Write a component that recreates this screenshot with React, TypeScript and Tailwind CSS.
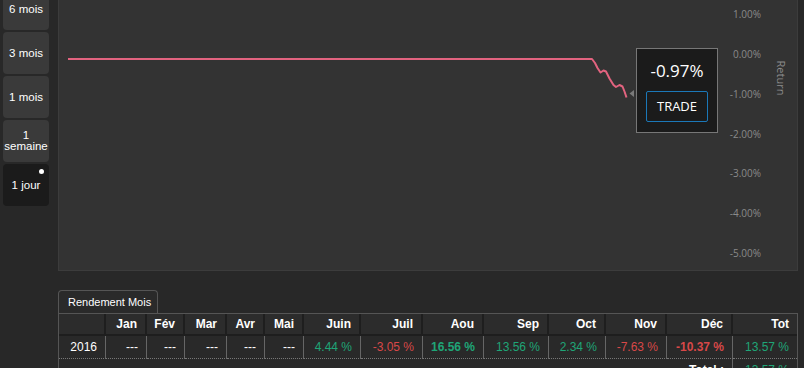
import React from 'react'

const periods = [
  { label: '6 mois' },
  { label: '3 mois' },
  { label: '1 mois' },
  { label: '1\nsemaine' },
  { label: '1 jour', active: true },
]

const axis = [
  { v: '1.00%', y: 14 },
  { v: '0.00%', y: 54 },
  { v: '-1.00%', y: 94 },
  { v: '-2.00%', y: 134 },
  { v: '-3.00%', y: 173 },
  { v: '-4.00%', y: 213 },
  { v: '-5.00%', y: 253 },
]

const months = ['Jan', 'Fév', 'Mar', 'Avr', 'Mai', 'Juin', 'Juil', 'Aou', 'Sep', 'Oct', 'Nov', 'Déc', 'Tot']
const widths = [47, 41, 38, 42, 38, 39, 57, 62, 61, 65, 57, 61, 66, 64]

const row = [
  { v: '---' },
  { v: '---' },
  { v: '---' },
  { v: '---' },
  { v: '---' },
  { v: '4.44 %', c: 'text-[#1fa577]' },
  { v: '-3.05 %', c: 'text-[#d84848]' },
  { v: '16.56 %', c: 'text-[#1fa577] font-bold' },
  { v: '13.56 %', c: 'text-[#1fa577]' },
  { v: '2.34 %', c: 'text-[#1fa577]' },
  { v: '-7.63 %', c: 'text-[#d84848]' },
  { v: '-10.37 %', c: 'text-[#d84848] font-bold' },
  { v: '13.57 %', c: 'text-[#1fa577]' },
]

const linePath =
  'M68 59 L592 59 L595 63 L597.5 68 L600.5 72.5 L603.5 70.5 L606 71.5 L609.5 78.5 L613.5 85 L616 87 L619.5 85 L622.5 86.5 L624.5 91.5 L626.5 97.5'

export default function App() {
  return (
    <div className="w-[804px] h-[368px] overflow-hidden bg-[#282828]" style={{ fontFamily: '"Liberation Sans", Arial, sans-serif' }}>
      {/* Top: period buttons + chart */}
      <div className="flex mt-[-12px] h-[283px]">
        <div className="w-[58px] flex flex-col gap-[2px] pl-[3px]">
          {periods.map(p => (
            <div
              key={p.label}
              className={`relative w-[46px] h-[42px] rounded-[4px] flex items-center justify-center text-center text-white text-[11.5px] leading-[11px] whitespace-pre-line ${p.active ? 'bg-[#1b1b1b]' : 'bg-[#3a3a3a]'}`}
            >
              {p.label}
              {p.active && <span className="absolute right-[5px] top-[5px] w-[5px] h-[5px] rounded-full bg-white" />}
            </div>
          ))}
        </div>

        <div className="relative w-[740px] h-[283px] border border-[#3c3c3c] bg-[#333333]">
          <svg className="absolute inset-0" width="738" height="281" viewBox="59 -11 738 281">
            <path d={linePath} fill="none" stroke="#e2637f" strokeWidth="2" strokeLinejoin="round" />
            <polygon points="634,90 629.5,93.5 634,97" fill="#7a7a7a" />
            {axis.map(a => (
              <text key={a.v} x="761" y={a.y + 3.5} textAnchor="end" fontSize="10" fill="#8a8a8a" fontFamily='"Open Sans", sans-serif'>
                {a.v}
              </text>
            ))}
            <text x="781" y="78" transform="rotate(90 781 78)" textAnchor="middle" dominantBaseline="central" fontSize="11" fill="#8c8c8c" fontFamily='"Open Sans", sans-serif'>
              Return
            </text>
          </svg>

          {/* Tooltip */}
          <div
            className="absolute left-[577px] top-[59px] w-[82px] h-[85px] bg-[#1b1b1b] border border-[#777] flex flex-col items-center pt-[12px]"
            style={{ fontFamily: '"Open Sans", sans-serif' }}
          >
            <div className="text-white text-[17px] leading-[20px]">-0.97%</div>
            <div className="mt-[10px] w-[62px] h-[31px] border border-[#1b78b8] rounded-[2px] flex items-center justify-center text-white text-[13px]">
              TRADE
            </div>
          </div>
        </div>
      </div>

      {/* Bottom: monthly returns */}
      <div className="ml-[58px] mt-[19px]">
        <div className="w-[100px] h-[23px] border border-b-0 border-[#555] rounded-t-[4px] bg-[#2a2a2a] pl-[9px] flex items-center text-white text-[11px]">
          Rendement Mois
        </div>
        <table className="w-[739px] table-fixed border-separate border-spacing-0 border-t border-l border-r border-[#555] text-[12px]">
          <colgroup>
            {widths.map((w, i) => (
              <col key={i} style={{ width: w }} />
            ))}
          </colgroup>
          <thead>
            <tr>
              <th className="h-[22px] bg-[#2c2c2c] border-r-2 border-b-2 border-[#1e1e1e]" />
              {months.map((m, i) => (
                <th
                  key={m}
                  className={`h-[22px] bg-[#2c2c2c] border-b-2 border-[#1e1e1e] text-right pr-[8px] text-white font-bold ${i < months.length - 1 ? 'border-r-2' : ''}`}
                >
                  {m}
                </th>
              ))}
            </tr>
          </thead>
          <tbody>
            <tr>
              <td className="h-[23px] bg-[#292929] border-r border-r-[#666] border-b border-dotted border-b-[#777] text-right pr-[8px] text-white" style={{ borderRightStyle: 'solid' }}>
                2016
              </td>
              {row.map((c, i) => (
                <td
                  key={i}
                  className={`h-[23px] bg-[#292929] border-b border-dotted border-b-[#777] text-right pr-[8px] ${c.c ?? 'text-white'} ${i < row.length - 1 ? 'border-r border-r-[#666]' : ''}`}
                  style={i < row.length - 1 ? { borderRightStyle: 'solid' } : undefined}
                >
                  {c.v}
                </td>
              ))}
            </tr>
            <tr>
              <td colSpan={13} className="h-[22px] border-r border-[#666] text-right pr-[8px] text-white font-bold">
                Total :
              </td>
              <td className="h-[22px] text-right pr-[8px] text-[#1fa577]">13.57 %</td>
            </tr>
          </tbody>
        </table>
      </div>
    </div>
  )
}
